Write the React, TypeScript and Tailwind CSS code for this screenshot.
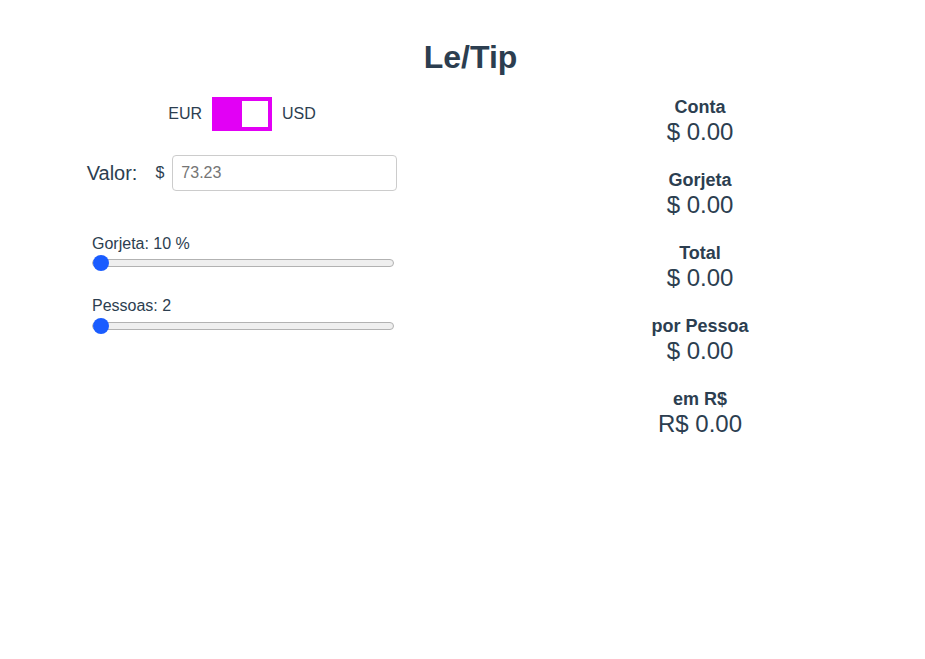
import React from "react";

const rangeCls =
  "block h-[16px] w-[302px] cursor-pointer appearance-none bg-transparent [&::-webkit-slider-runnable-track]:h-[8px] [&::-webkit-slider-runnable-track]:rounded-full [&::-webkit-slider-runnable-track]:border [&::-webkit-slider-runnable-track]:border-[#b2b2b2] [&::-webkit-slider-runnable-track]:bg-[#efefef] [&::-webkit-slider-thumb]:mt-[-5px] [&::-webkit-slider-thumb]:h-[16px] [&::-webkit-slider-thumb]:w-[16px] [&::-webkit-slider-thumb]:appearance-none [&::-webkit-slider-thumb]:rounded-full [&::-webkit-slider-thumb]:bg-[#1a5cff]";

export default function App() {
  return (
    <div
      className="min-h-[659px] w-full bg-white text-[#2c3e50]"
      style={{ fontFamily: '"Liberation Sans", Arial, sans-serif' }}
    >
      <h1 className="pl-[16px] pt-[39px] text-center text-[32px] font-bold leading-[37px]">Le/Tip</h1>
      <div className="mt-[21px] flex">
        <div className="flex w-[484px] flex-col items-center">
          <div className="flex items-center gap-[10px] text-[16px] leading-[18px]">
            <span>EUR</span>
            <div className="flex h-[34px] w-[60px] items-center justify-end bg-[#e200f5] pr-[4px]">
              <div className="h-[26px] w-[26px] bg-white" />
            </div>
            <span>USD</span>
          </div>
          <div className="mt-[24px] flex items-center">
            <span className="text-[20px] leading-[23px]">Valor:</span>
            <span className="ml-[18px] text-[16px] leading-[18px]">$</span>
            <input
              type="text"
              placeholder="73.23"
              className="ml-[8px] h-[36px] w-[225px] rounded-[4px] border border-[#ccc] px-[8px] text-[16px] text-[#2c3e50] outline-none placeholder:text-[#757575]"
            />
          </div>
          <div className="ml-[2px] mt-[44px] flex w-[302px] flex-col">
            <label className="text-[16px] leading-[18px]">Gorjeta: 10 %</label>
            <input type="range" min={10} max={50} defaultValue={10} className={"mt-[2px] " + rangeCls} />
          </div>
          <div className="ml-[2px] mt-[26px] flex w-[302px] flex-col">
            <label className="text-[16px] leading-[18px]">Pessoas: 2</label>
            <input type="range" min={2} max={20} defaultValue={2} className={"mt-[3px] " + rangeCls} />
          </div>
        </div>
        <div className="flex w-[432px] flex-col items-center gap-[24px]">
          {[
            ["Conta", "$ 0.00"],
            ["Gorjeta", "$ 0.00"],
            ["Total", "$ 0.00"],
            ["por Pessoa", "$ 0.00"],
            ["em R$", "R$ 0.00"],
          ].map(([label, value]) => (
            <div key={label} className="flex flex-col items-center">
              <span className="text-[18px] font-bold leading-[21px]">{label}</span>
              <span className="text-[24px] leading-[28px]">{value}</span>
            </div>
          ))}
        </div>
      </div>
    </div>
  );
}
